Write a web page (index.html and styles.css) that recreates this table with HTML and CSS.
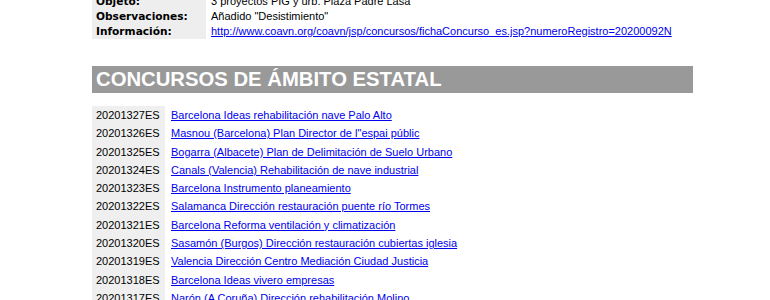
FILE: index.html
```html
<!DOCTYPE html>
<html lang="es">
<head>
<meta charset="utf-8">
<title>Concursos</title>
<link rel="stylesheet" href="styles.css">
</head>
<body>
<div class="page">
  <div class="ficha">
    <div class="lbl">Objeto:</div><div class="val">3 proyectos PIG y urb. Plaza Padre Lasa</div>
    <div class="lbl">Observaciones:</div><div class="val">Añadido "Desistimiento"</div>
    <div class="lbl">Información:</div><div class="val"><a href="#">http://www.coavn.org/coavn/jsp/concursos/fichaConcurso_es.jsp?numeroRegistro=20200092N</a></div>
  </div>
  <h2 class="section">CONCURSOS DE ÁMBITO ESTATAL</h2>
  <div class="lista">
    <div class="cod">20201327ES</div><div class="tit"><a href="#">Barcelona Ideas rehabilitación nave Palo Alto</a></div>
    <div class="cod">20201326ES</div><div class="tit"><a href="#">Masnou (Barcelona) Plan Director de l"espai públic</a></div>
    <div class="cod">20201325ES</div><div class="tit"><a href="#">Bogarra (Albacete) Plan de Delimitación de Suelo Urbano</a></div>
    <div class="cod">20201324ES</div><div class="tit"><a href="#">Canals (Valencia) Rehabilitación de nave industrial</a></div>
    <div class="cod">20201323ES</div><div class="tit"><a href="#">Barcelona Instrumento planeamiento</a></div>
    <div class="cod">20201322ES</div><div class="tit"><a href="#">Salamanca Dirección restauración puente río Tormes</a></div>
    <div class="cod">20201321ES</div><div class="tit"><a href="#">Barcelona Reforma ventilación y climatización</a></div>
    <div class="cod">20201320ES</div><div class="tit"><a href="#">Sasamón (Burgos) Dirección restauración cubiertas iglesia</a></div>
    <div class="cod">20201319ES</div><div class="tit"><a href="#">Valencia Dirección Centro Mediación Ciudad Justicia </a></div>
    <div class="cod">20201318ES</div><div class="tit"><a href="#">Barcelona Ideas vivero empresas</a></div>
    <div class="cod">20201317ES</div><div class="tit"><a href="#">Narón (A Coruña) Dirección rehabilitación Molino</a></div>
  </div>
</div>
</body>
</html>
```

FILE: styles.css
```css
html, body {
  margin: 0;
  padding: 0;
  background: #ffffff;
  overflow: hidden;
}
body {
  font-family: "Liberation Sans", Arial, sans-serif;
  font-size: 11px;
  color: #000000;
}
.page {
  width: 601px;
  margin: -6px 0 0 92px;
}
.ficha {
  display: grid;
  grid-template-columns: 114px 1fr;
  grid-auto-rows: 15px;
}
.lbl {
  background: #eeeeee;
  padding-left: 4px;
  font-family: "DejaVu Sans", Verdana, sans-serif;
  font-weight: bold;
  font-size: 10.6px;
  line-height: 15px;
  white-space: nowrap;
}
.val {
  padding-left: 5px;
  line-height: 15px;
  white-space: nowrap;
}
a {
  color: #0000ee;
  text-decoration: underline;
}
.section {
  margin: 27px 0 13px 0;
  height: 27px;
  background: #999999;
  color: #ffffff;
  font-size: 20.3px;
  font-weight: bold;
  line-height: 27px;
  padding-left: 4px;
}
.lista {
  display: grid;
  grid-template-columns: 73px 1fr;
  grid-auto-rows: 18.3px;
}
.cod {
  background: #efefef;
  padding-left: 4px;
  line-height: 18.3px;
  white-space: nowrap;
}
.tit {
  padding-left: 6px;
  line-height: 18.3px;
  white-space: nowrap;
}
```
